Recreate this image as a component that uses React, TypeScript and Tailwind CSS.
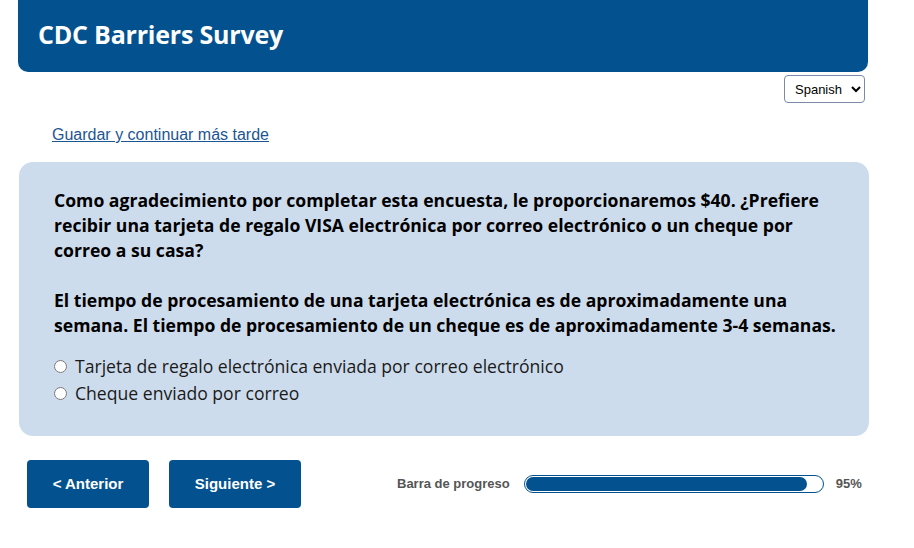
import { useState } from "react";

const App = () => {
  const [choice, setChoice] = useState("");
  const progress = 95;

  return (
    <div className="min-h-screen bg-white font-['Liberation_Sans',Arial,sans-serif]">
      {/* Header */}
      <header className="mx-[18px] w-[850px] h-[72px] bg-[#03528f] rounded-b-[10px] flex items-center px-5">
        <h1 className="text-white text-[25px] font-bold font-['Open_Sans',sans-serif] tracking-[-0.2px] mt-[-2px]">
          CDC Barriers Survey
        </h1>
      </header>

      {/* Language */}
      <div className="w-[865px] flex justify-end pt-[3px]">
        <select className="h-[28px] w-[81px] border border-[#7a8aa8] rounded-[4px] bg-white text-[13px] text-black pl-[6px] font-['Liberation_Sans',Arial,sans-serif]">
          <option>Spanish</option>
          <option>English</option>
        </select>
      </div>

      {/* Save link */}
      <div className="pl-[52px] pt-[20px]">
        <a href="#" className="text-[16px] text-[#1c5593] underline">
          Guardar y continuar más tarde
        </a>
      </div>

      {/* Question */}
      <section className="mx-[19px] mt-[15px] w-[850px] h-[274px] bg-[#cddced] rounded-[14px] pl-[35px] pt-[26px] font-['Open_Sans',sans-serif]">
        <div className="w-[800px]">
          <p className="text-[17.6px] font-bold leading-[25px] text-black">
            Como agradecimiento por completar esta encuesta, le proporcionaremos $40. ¿Prefiere recibir una tarjeta de regalo VISA electrónica por correo electrónico o un cheque por correo a su casa?
          </p>
          <p className="mt-[25px] text-[17.6px] font-bold leading-[25px] text-black">
            El tiempo de procesamiento de una tarjeta electrónica es de aproximadamente una semana. El tiempo de procesamiento de un cheque es de aproximadamente 3-4 semanas.
          </p>
        </div>
        <div className="mt-[15px] flex flex-col">
          {[
            "Tarjeta de regalo electrónica enviada por correo electrónico",
            "Cheque enviado por correo",
          ].map((opt) => (
            <label key={opt} className="flex items-center h-[27px] text-[17.6px] text-[#1a1a1a] cursor-pointer">
              <input
                type="radio"
                name="pay"
                checked={choice === opt}
                onChange={() => setChoice(opt)}
                className="w-[13px] h-[13px] mr-[8px] ml-0"
              />
              {opt}
            </label>
          ))}
        </div>
      </section>

      {/* Footer nav */}
      <div className="flex items-center pl-[27px] pt-[24px]">
        <button className="w-[122px] h-[48px] bg-[#03528f] text-white text-[15px] font-bold rounded-[4px]">
          &lt; Anterior
        </button>
        <button className="ml-[20px] w-[132px] h-[48px] bg-[#03528f] text-white text-[15px] font-bold rounded-[4px]">
          Siguiente &gt;
        </button>
        <span className="ml-[96px] text-[13px] font-bold text-[#555]">Barra de progreso</span>
        <div className="ml-[14px] w-[300px] h-[18px] border border-[#03528f] rounded-full p-[1px] bg-white">
          <div className="h-full bg-[#03528f] rounded-full" style={{ width: `${progress}%` }} />
        </div>
        <span className="ml-[12px] text-[13px] font-bold text-[#555]">{progress}%</span>
      </div>
    </div>
  );
};

export default App;
